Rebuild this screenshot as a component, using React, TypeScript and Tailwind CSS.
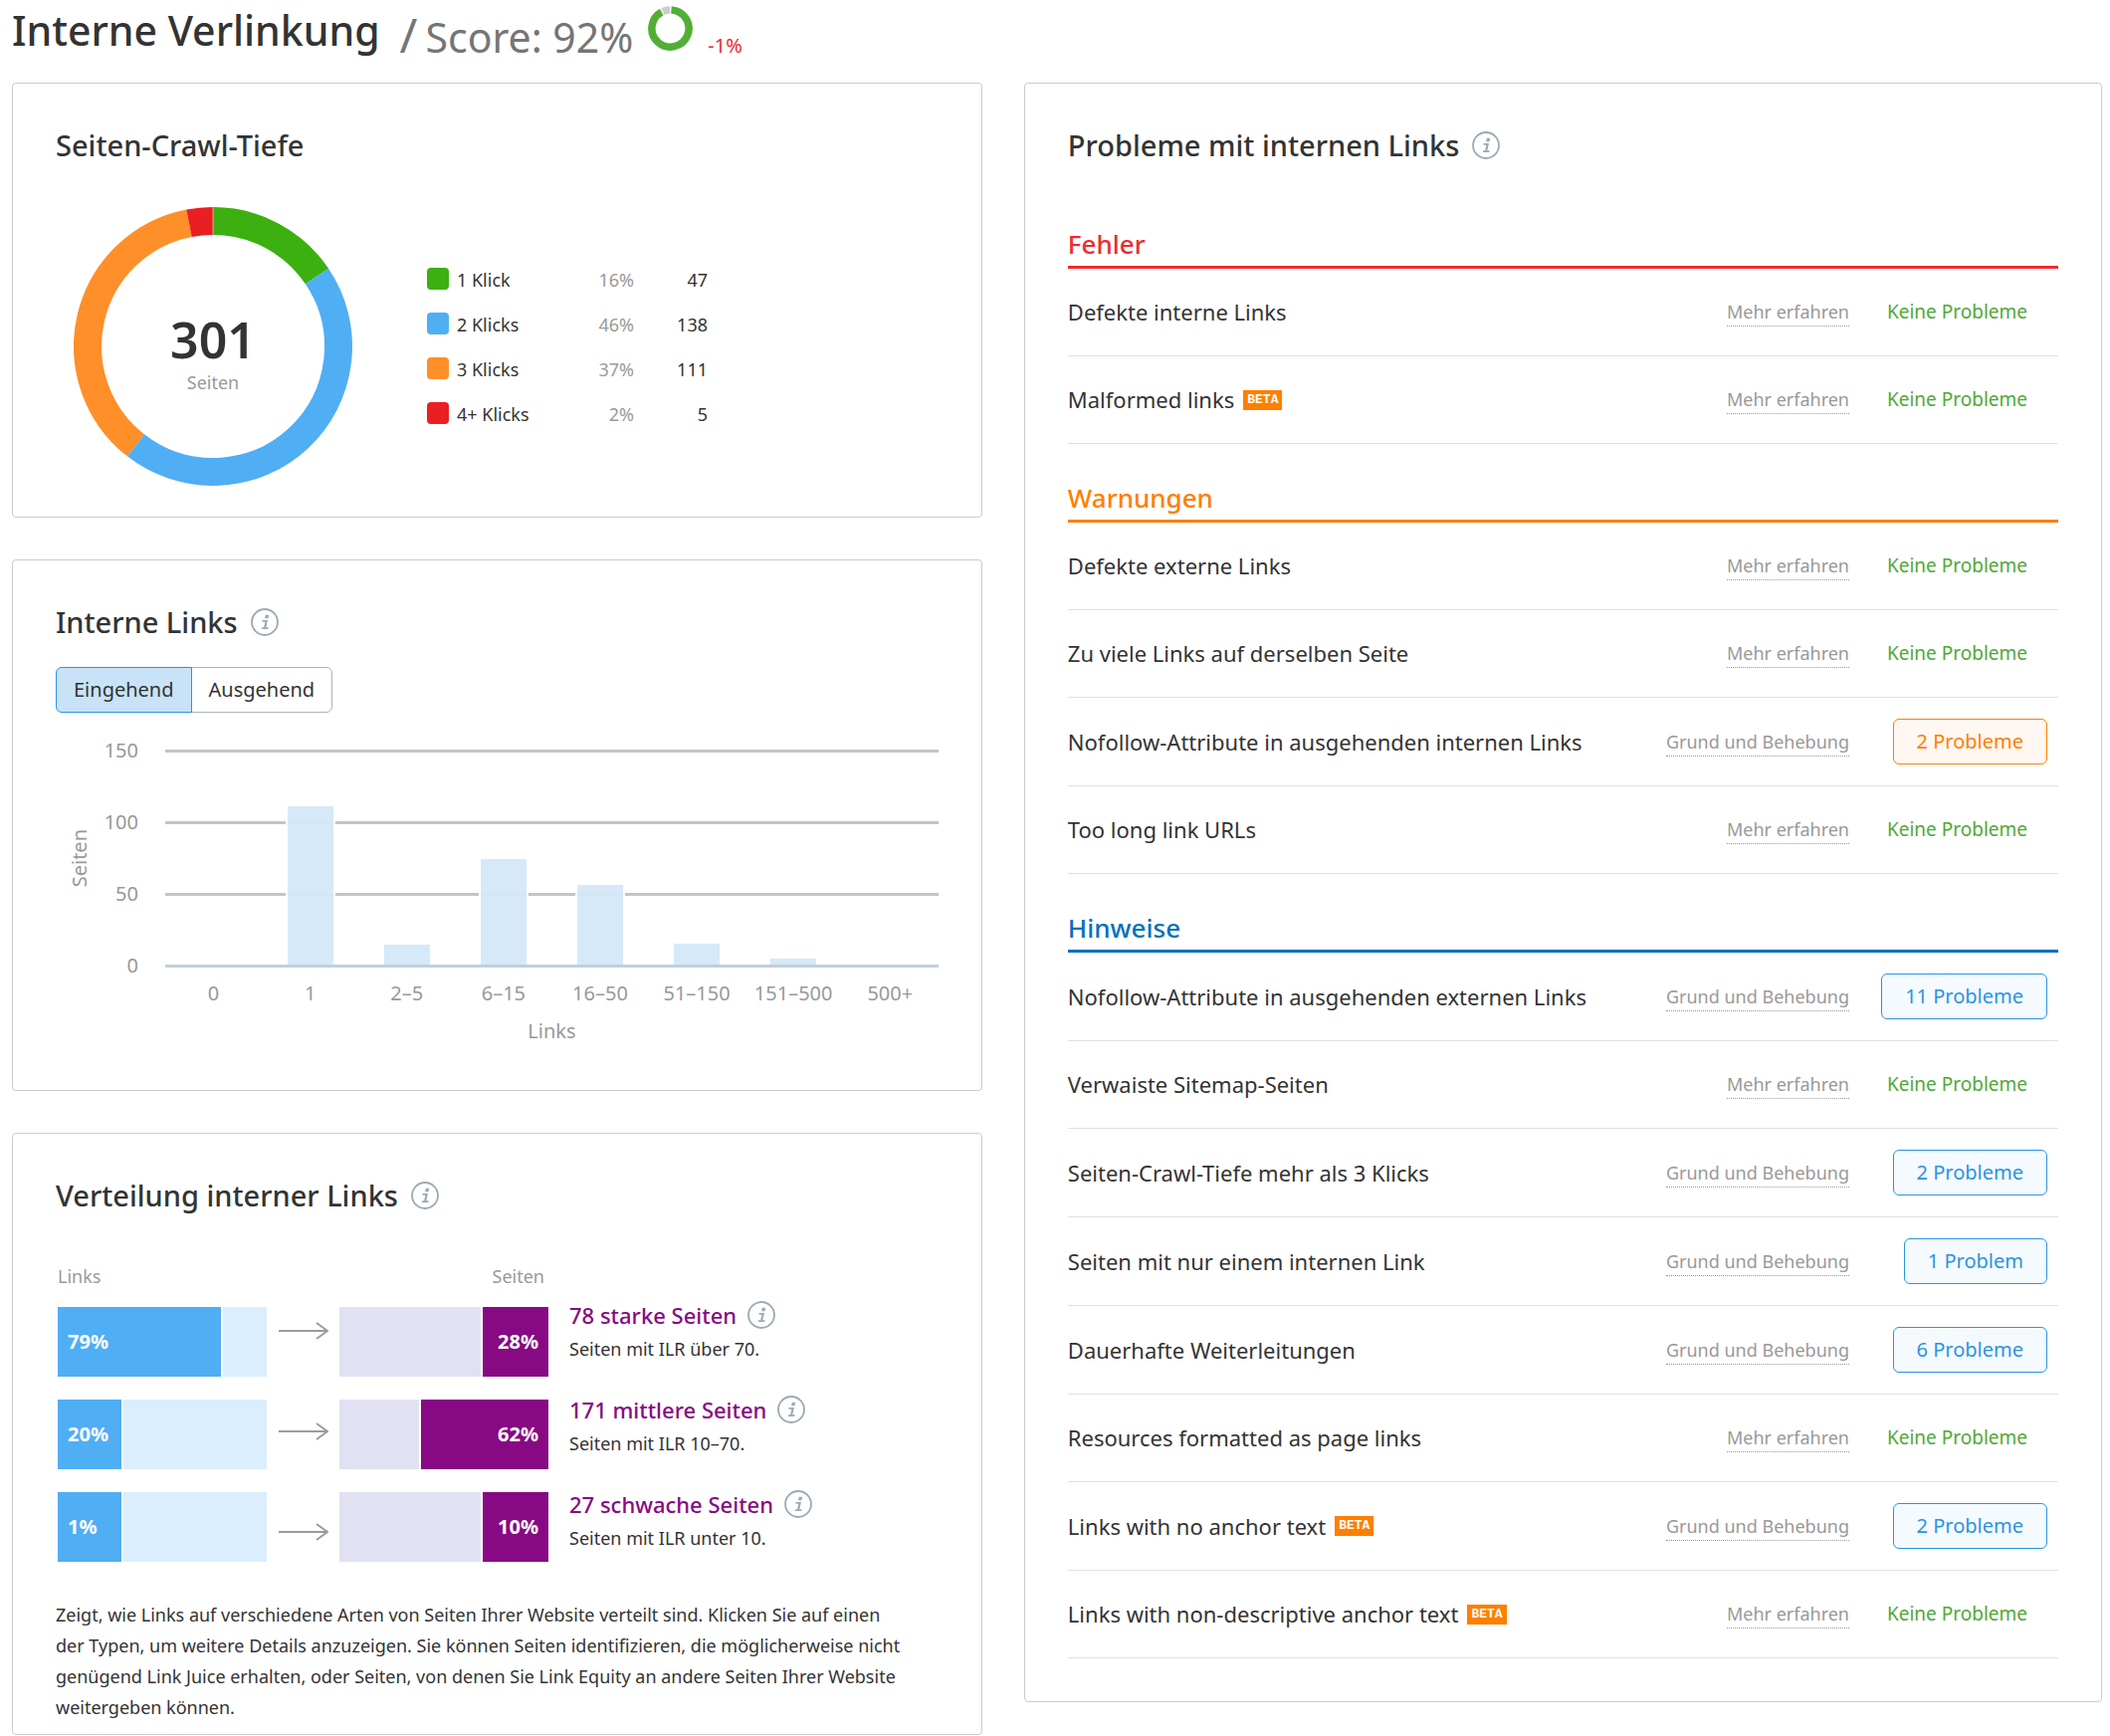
import { useState } from 'react';
import type { ReactNode } from 'react';
import clsx from 'clsx';

const depth = [
  { label: '1 Klick', percent: '16%', pages: 47, swatch: 'bg-[#3cb010]', color: '#3cb010', from: 0, to: 56 },
  { label: '2 Klicks', percent: '46%', pages: 138, swatch: 'bg-[#50aef4]', color: '#50aef4', from: 56, to: 218 },
  { label: '3 Klicks', percent: '37%', pages: 111, swatch: 'bg-[#ff8f29]', color: '#ff8f29', from: 218, to: 349 },
  { label: '4+ Klicks', percent: '2%', pages: 5, swatch: 'bg-[#ea1f24]', color: '#ea1f24', from: 349, to: 360 },
];

const ticks = [150, 100, 50, 0];

const bars = [
  { label: '0', value: 0 },
  { label: '1', value: 111 },
  { label: '2–5', value: 14 },
  { label: '6–15', value: 74 },
  { label: '16–50', value: 56 },
  { label: '51–150', value: 15 },
  { label: '151–500', value: 4 },
  { label: '500+', value: 0 },
];

const distribution = [
  { title: '78 starke Seiten', hint: 'Seiten mit ILR über 70.', links: 79, pages: 28 },
  { title: '171 mittlere Seiten', hint: 'Seiten mit ILR 10–70.', links: 20, pages: 62 },
  { title: '27 schwache Seiten', hint: 'Seiten mit ILR unter 10.', links: 1, pages: 10 },
];

type Tone = 'error' | 'warning' | 'notice';

interface Issue {
  name: string;
  beta?: boolean;
  count?: number;
}

const groups: { title: string; tone: Tone; issues: Issue[] }[] = [
  {
    title: 'Fehler',
    tone: 'error',
    issues: [{ name: 'Defekte interne Links' }, { name: 'Malformed links', beta: true }],
  },
  {
    title: 'Warnungen',
    tone: 'warning',
    issues: [
      { name: 'Defekte externe Links' },
      { name: 'Zu viele Links auf derselben Seite' },
      { name: 'Nofollow-Attribute in ausgehenden internen Links', count: 2 },
      { name: 'Too long link URLs' },
    ],
  },
  {
    title: 'Hinweise',
    tone: 'notice',
    issues: [
      { name: 'Nofollow-Attribute in ausgehenden externen Links', count: 11 },
      { name: 'Verwaiste Sitemap-Seiten' },
      { name: 'Seiten-Crawl-Tiefe mehr als 3 Klicks', count: 2 },
      { name: 'Seiten mit nur einem internen Link', count: 1 },
      { name: 'Dauerhafte Weiterleitungen', count: 6 },
      { name: 'Resources formatted as page links' },
      { name: 'Links with no anchor text', beta: true, count: 2 },
      { name: 'Links with non-descriptive anchor text', beta: true },
    ],
  },
];

const headingTone: Record<Tone, string> = {
  error: 'text-[#ee2b2f] border-[#ee2b2f]',
  warning: 'text-[#ff7f00] border-[#ff7f00]',
  notice: 'text-[#0071bc] border-[#0071bc]',
};

const buttonTone: Record<Tone, string> = {
  error: 'text-[#ee2b2f] border-[#ee2b2f] bg-[#fff4f4]',
  warning: 'text-[#ff7f00] border-[#ff7f00] bg-[#fff7f1]',
  notice: 'text-[#2b94e1] border-[#2b94e1] bg-[#f5faff]',
};

function arc(cx: number, r: number, from: number, to: number) {
  const point = (deg: number) => {
    const a = ((deg - 90) * Math.PI) / 180;
    return `${cx + r * Math.cos(a)} ${cx + r * Math.sin(a)}`;
  };
  return `M${point(from)}A${r} ${r} 0 ${to - from > 180 ? 1 : 0} 1 ${point(to)}`;
}

function InfoButton() {
  return (
    <button type="button" aria-label="Info" className="shrink-0 text-[#9aabb2]">
      <svg className="block w-7 h-7" viewBox="0 0 28 28" fill="none">
        <circle cx="14" cy="14" r="13" stroke="currentColor" strokeWidth="1.8" />
        <path
          d="M14.8 6.8h3.4l-.7 3.4h-3.4zM11.2 12h5.8l-1.7 7.3h2.4l-.4 1.8h-6.5l.4-1.8h1.9l1.3-5.5h-2.5z"
          fill="currentColor"
        />
      </svg>
    </button>
  );
}

function Card({ title, info, className, children }: { title: string; info?: boolean; className?: string; children: ReactNode }) {
  return (
    <section className={clsx('border border-[#c9cccd] rounded-sm px-[43px] pt-[42px]', className)}>
      <div className="flex items-center gap-[13px]">
        <h2 className="text-[29px] leading-[40px] font-medium">{title}</h2>
        {info && <InfoButton />}
      </div>
      {children}
    </section>
  );
}

function CrawlDepth() {
  return (
    <Card title="Seiten-Crawl-Tiefe" className="pb-[31px]">
      <div className="flex items-center mt-[42px] pl-[18px]">
        <div className="relative w-[280px] h-[280px] shrink-0">
          <svg className="block w-full h-full" viewBox="0 0 280 280" fill="none">
            {depth.map((d) => (
              <path key={d.label} d={arc(140, 126, d.from, d.to)} stroke={d.color} strokeWidth="28" />
            ))}
            <path d="M140 0v28" stroke="#fff" strokeOpacity=".5" />
          </svg>
          <div className="absolute inset-0 flex flex-col items-center justify-center pt-4">
            <span className="text-[50px] leading-[56px] font-semibold">301</span>
            <span className="text-[18px] leading-[30px] text-[#999]">Seiten</span>
          </div>
        </div>
        <table className="ml-[75px] text-[18px] leading-6">
          <tbody>
            {depth.map((d) => (
              <tr key={d.label} className="h-[45px]">
                <th scope="row" className="w-[130px] font-normal text-left">
                  <span className="flex items-start gap-2">
                    <span className={clsx('w-[22px] h-[22px] rounded', d.swatch)} />
                    {d.label}
                  </span>
                </th>
                <td className="w-[78px] text-right text-[#999]">{d.percent}</td>
                <td className="w-[74px] text-right">{d.pages}</td>
              </tr>
            ))}
          </tbody>
        </table>
      </div>
    </Card>
  );
}

function InternalLinks() {
  const [tab, setTab] = useState('Eingehend');

  return (
    <Card title="Interne Links" info className="pb-[44px]">
      <div className="flex mt-[25px] text-[20px] leading-[44px]">
        {['Eingehend', 'Ausgehend'].map((name) => (
          <button
            key={name}
            type="button"
            aria-pressed={tab === name}
            onClick={() => setTab(name)}
            className={clsx(
              'border px-[17px] first:rounded-l-md last:rounded-r-md last:-ml-px',
              tab === name ? 'relative bg-[#c8e3f7] border-[#2b94e1]' : 'bg-white border-[#a9b4b6]',
            )}
          >
            {name}
          </button>
        ))}
      </div>

      <div className="flex mt-7 text-[20px] text-[#999]">
        <div className="w-12 h-[236px] flex items-center justify-center">
          <span className="[writing-mode:vertical-rl] rotate-180 leading-6">Seiten</span>
        </div>
        <div className="flex-1">
          <div className="relative flex flex-col justify-between h-[236px]">
            {ticks.map((tick) => (
              <div key={tick} className="flex items-center gap-[27px] h-5">
                <span className="w-[35px] text-right leading-5">{tick}</span>
                <span className={clsx('flex-1 h-[3px]', tick ? 'bg-[#c4c4c4]' : 'bg-[#c0cfdc]')} />
              </div>
            ))}
            <div className="absolute left-[62px] right-0 top-2.5 bottom-[11px] grid grid-cols-8 items-end justify-items-center">
              {bars.map((bar) => (
                <div
                  key={bar.label}
                  className={clsx('w-[50px] border-x-2 border-white', bar.value > 0 && 'bg-[#d4e8f9]/95')}
                  style={{ height: `${(bar.value / 150) * 100}%` }}
                />
              ))}
            </div>
          </div>
          <div className="grid grid-cols-8 mt-[3px] pl-[62px] leading-[30px] text-center whitespace-nowrap">
            {bars.map((bar) => (
              <span key={bar.label}>{bar.label}</span>
            ))}
          </div>
          <p className="mt-2 pl-[62px] leading-[30px] text-center">Links</p>
        </div>
      </div>
    </Card>
  );
}

function Distribution() {
  return (
    <Card title="Verteilung interner Links" info className="pb-[11px]">
      <div className="flex mt-[49px] pl-0.5 text-[18px]">
        <div className="w-[210px]">
          <p className="leading-6 text-[#999]">Links</p>
          <div className="flex flex-col gap-[23px] mt-[19px]">
            {distribution.map((row) => (
              <div key={row.title} className="h-[70px] bg-[#daeefd]">
                <div
                  className="h-full min-w-[66px] px-2.5 bg-[#50aef4] border-r-2 border-white text-[20px] leading-[70px] font-bold text-white"
                  style={{ width: `${row.links}%` }}
                >
                  {row.links}%
                </div>
              </div>
            ))}
          </div>
        </div>

        <div className="flex flex-col items-center gap-[77px] w-[73px] pt-[55px]">
          {distribution.map((row) => (
            <svg key={row.title} className="w-[50px] h-6" viewBox="0 0 50 24" fill="none" stroke="#9b9b9b" strokeWidth="2">
              <path d="M0 12h49M38 4l11 8-11 8" />
            </svg>
          ))}
        </div>

        <div className="w-[210px]">
          <p className="leading-6 pr-1 text-right text-[#999]">Seiten</p>
          <div className="flex flex-col gap-[23px] mt-[19px]">
            {distribution.map((row) => (
              <div key={row.title} className="flex justify-end h-[70px] bg-[#e1e1f4]">
                <div
                  className="h-full min-w-[68px] px-2.5 bg-[#870a84] border-l-2 border-white text-[20px] leading-[70px] font-bold text-right text-white"
                  style={{ width: `${row.pages}%` }}
                >
                  {row.pages}%
                </div>
              </div>
            ))}
          </div>
        </div>

        <div className="flex flex-col gap-[27px] pl-[21px] pt-[34px]">
          {distribution.map((row) => (
            <div key={row.title}>
              <div className="flex items-center gap-[11px] h-[34px]">
                <a href="#" className="text-[22px] font-medium text-[#870a84]">{row.title}</a>
                <InfoButton />
              </div>
              <p className="leading-[34px]">{row.hint}</p>
            </div>
          ))}
        </div>
      </div>

      <p className="mt-[38px] pr-8 text-[18px] leading-[31px]">
        Zeigt, wie Links auf verschiedene Arten von Seiten Ihrer Website verteilt sind. Klicken Sie auf einen der
        Typen, um weitere Details anzuzeigen. Sie können Seiten identifizieren, die möglicherweise nicht genügend
        Link Juice erhalten, oder Seiten, von denen Sie Link Equity an andere Seiten Ihrer Website weitergeben
        können.
      </p>
    </Card>
  );
}

function IssueRow({ issue, tone }: { issue: Issue; tone: Tone }) {
  return (
    <li className={clsx('flex items-center border-b border-[#dde2e3]', issue.count ? 'h-[89px]' : 'h-[88px]')}>
      <div className="flex items-center gap-[9px] flex-1 text-[22px]">
        {issue.name}
        {issue.beta && (
          <span className="px-1 bg-[#ff7f00] font-['Liberation_Mono',monospace] text-[13px] leading-5 font-bold text-white">
            BETA
          </span>
        )}
      </div>
      <a href="#" className="border-b border-dotted border-[#999] text-[18px] leading-7 text-[#999]">
        {issue.count ? 'Grund und Behebung' : 'Mehr erfahren'}
      </a>
      <div className="flex justify-end w-[210px] pr-[11px]">
        {issue.count ? (
          <button type="button" className={clsx('border rounded-md px-[23px] text-[20px] leading-[44px]', buttonTone[tone])}>
            {issue.count} {issue.count === 1 ? 'Problem' : 'Probleme'}
          </button>
        ) : (
          <span className="pr-5 text-[19px] text-[#4fa934]">Keine Probleme</span>
        )}
      </div>
    </li>
  );
}

export default function App() {
  return (
    <main className="bg-white pl-3 pr-2 pb-0.5 font-['Noto_Sans',sans-serif] text-[#333]">
      <header className="flex items-start h-[83px]">
        <h1 className="text-[41px] leading-[60px] font-medium">Interne Verlinkung</h1>
        <div className="flex items-baseline ml-5 text-[41px] leading-[70px] text-[#757575]">
          <span className="mr-2 text-[48px]">/</span>
          <span>Score: 92%</span>
          <svg className="self-start w-[45px] h-[45px] mt-1.5 mx-[15px]" viewBox="0 0 45 45" fill="none" strokeWidth="7.5">
            <path d={arc(22.5, 18.6, 3, 332)} stroke="#52af35" />
            <path d={arc(22.5, 18.6, 336, 359)} stroke="#ccc" />
          </svg>
          <span className="text-[20px] leading-6 text-[#ee2b2f]">-1%</span>
        </div>
      </header>

      <div className="grid grid-cols-[minmax(0,9fr)_minmax(0,10fr)] gap-[42px] items-start">
        <div className="flex flex-col gap-[42px]">
          <CrawlDepth />
          <InternalLinks />
          <Distribution />
        </div>

        <Card title="Probleme mit internen Links" info className="pb-[43px]">
          <div className="flex flex-col gap-9 mt-[61px]">
            {groups.map((group) => (
              <div key={group.title}>
                <h3 className={clsx('pb-1 border-b-3 text-[26px] leading-9 font-medium', headingTone[group.tone])}>
                  {group.title}
                </h3>
                <ul>
                  {group.issues.map((issue) => (
                    <IssueRow key={issue.name} issue={issue} tone={group.tone} />
                  ))}
                </ul>
              </div>
            ))}
          </div>
        </Card>
      </div>
    </main>
  );
}
